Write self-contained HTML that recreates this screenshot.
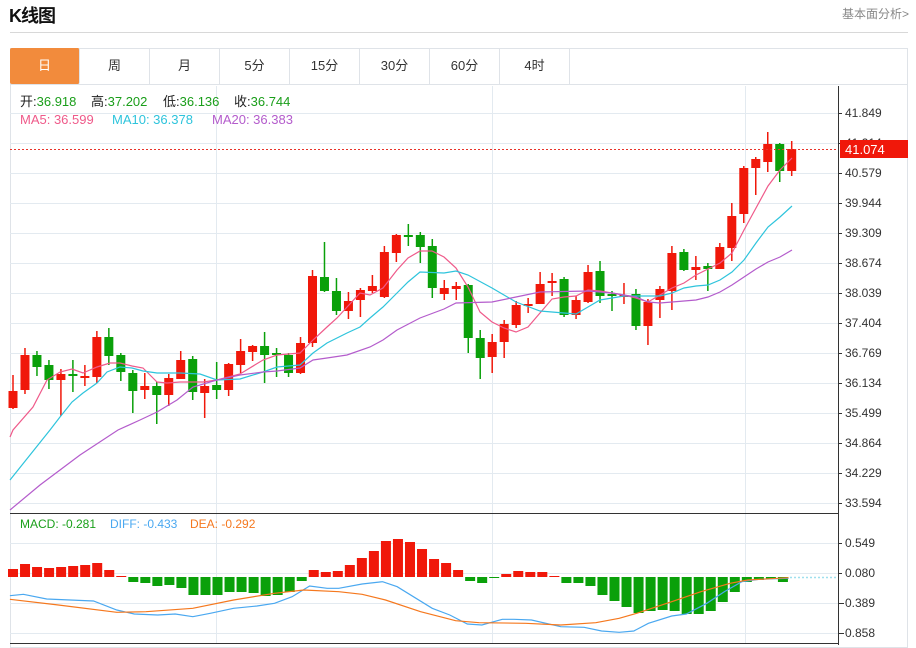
<!DOCTYPE html>
<html><head><meta charset="utf-8">
<style>
*{margin:0;padding:0;box-sizing:border-box}
body{width:916px;height:645px;background:#fff;font-family:"Liberation Sans","Noto Sans CJK SC",sans-serif;position:relative;overflow:hidden}
.title{position:absolute;left:9px;top:2px;font-size:18px;font-weight:bold;color:#111;letter-spacing:-1px}
.more{position:absolute;right:7px;top:5px;font-size:12px;color:#888}
.hr{position:absolute;left:10px;top:32px;width:898px;height:1px;background:#d8d8d8}
.box{position:absolute;left:10px;top:48px;width:898px;height:600px;border:1px solid #dfe3e8}
.tabs{position:absolute;left:10px;top:48px;height:37px;width:898px;border-bottom:1px solid #dfe3e8}
.tab{position:absolute;top:0;width:70px;height:36px;line-height:36px;text-align:center;font-size:13px;color:#333;border-right:1px solid #dfe3e8}
.tab.on{background:#f28b3c;color:#fff;border-radius:2px}
svg{position:absolute;left:0;top:0}
</style></head><body>
<div class="title">K线图</div>
<div class="more">基本面分析&gt;</div>
<div class="hr"></div>
<div class="box"></div>
<div class="tabs">
<div class="tab on" style="left:0">日</div>
<div class="tab" style="left:70px">周</div>
<div class="tab" style="left:140px">月</div>
<div class="tab" style="left:210px">5分</div>
<div class="tab" style="left:280px">15分</div>
<div class="tab" style="left:350px">30分</div>
<div class="tab" style="left:420px">60分</div>
<div class="tab" style="left:490px">4时</div>
</div>
<svg id="s" width="916" height="645" xmlns="http://www.w3.org/2000/svg" font-family="Liberation Sans, Noto Sans CJK SC, sans-serif">
<g id="grid" stroke="#e3eaf0" stroke-width="1"></g>
<g id="cd"></g>
<g id="ln" fill="none" stroke-width="1.2"></g>
<g id="mc"></g>
<line x1="10" y1="149.5" x2="838" y2="149.5" stroke="#e8332a" stroke-dasharray="2,2"/>
<line x1="790" y1="577.5" x2="838" y2="577.5" stroke="#9fe0ee" stroke-dasharray="2,2" stroke-width="1.5"/>
<line x1="838.5" y1="86" x2="838.5" y2="645" stroke="#333"/>
<line x1="10" y1="513.5" x2="838" y2="513.5" stroke="#333"/>
<line x1="10" y1="643.5" x2="838" y2="643.5" stroke="#333"/>
<g id="ax" font-size="12" fill="#333"></g>
<rect x="840" y="140" width="68" height="18" fill="#f0180a"/>
<text x="845" y="154" font-size="13" fill="#fff">41.074</text>
<g font-size="13">
<text x="20" y="106" fill="#222">开:<tspan fill="#1a9e1a">36.918</tspan></text>
<text x="91" y="106" fill="#222">高:<tspan fill="#1a9e1a">37.202</tspan></text>
<text x="163" y="106" fill="#222">低:<tspan fill="#1a9e1a">36.136</tspan></text>
<text x="234" y="106" fill="#222">收:<tspan fill="#1a9e1a">36.744</tspan></text>
<text x="20" y="124" fill="#ef5a8a">MA5: 36.599</text>
<text x="112" y="124" fill="#2ec4dc">MA10: 36.378</text>
<text x="212" y="124" fill="#b45ccc">MA20: 36.383</text>
</g>
<g font-size="12">
<text x="20" y="528" fill="#1aa01a">MACD: -0.281</text>
<text x="110" y="528" fill="#4aa8f0">DIFF: -0.433</text>
<text x="190" y="528" fill="#f5781e">DEA: -0.292</text>
</g>
</svg>
<script>
var NS="http://www.w3.org/2000/svg";
function el(p,t,a){var e=document.createElementNS(NS,t);for(var k in a)e.setAttribute(k,a[k]);document.getElementById(p).appendChild(e);return e;}
[113,143,173,203,233,263,293,323,353,383,413,443,473,503,543,573,603,633].forEach(function(y){el("grid","line",{x1:10,x2:838,y1:y+.5,y2:y+.5});});
[216,492,745].forEach(function(x){el("grid","line",{x1:x+.5,x2:x+.5,y1:86,y2:513});el("grid","line",{x1:x+.5,x2:x+.5,y1:514,y2:643});});
var labs=[[113,"41.849"],[143,"41.214"],[173,"40.579"],[203,"39.944"],[233,"39.309"],[263,"38.674"],[293,"38.039"],[323,"37.404"],[353,"36.769"],[383,"36.134"],[413,"35.499"],[443,"34.864"],[473,"34.229"],[503,"33.594"],[543,"0.549"],[573,"0.080"],[603,"-0.389"],[633,"-0.858"]];
labs.forEach(function(l){var t=el("ax","text",{x:845,y:l[0]+4});t.textContent=l[1].replace("-","");if(l[1][0]=="-"){el("ax","line",{x1:839,x2:844,y1:l[0]+.5,y2:l[0]+.5,stroke:"#333"});}el("ax","line",{x1:839,x2:842,y1:l[0]+.5,y2:l[0]+.5,stroke:"#333"});});
var C=[[391,408,375,409,1],[355,390,348,394,1],[355,367,351,376,0],[365,380,360,389,0],[374,380,369,416,1],[374,376,360,392,0],[376,377,365,386,1],[337,377,331,383,1],[337,356,328,365,0],[355,372,353,381,0],[373,391,370,413,0],[386,390,373,399,1],[386,395,382,424,0],[378,395,374,406,1],[360,379,351,379,1],[359,392,356,400,0],[386,393,379,418,1],[385,390,362,399,0],[364,390,363,396,1],[351,365,339,373,1],[346,352,345,361,1],[346,355,332,383,0],[353,355,348,377,0],[355,373,353,377,0],[343,373,337,374,1],[276,343,270,347,1],[277,291,242,292,0],[291,311,278,315,0],[301,311,292,319,1],[290,300,288,317,1],[286,291,275,293,1],[252,297,246,298,1],[235,253,234,262,1],[235,237,224,246,0],[235,247,232,263,0],[246,288,239,298,0],[288,294,280,300,1],[286,289,282,300,1],[285,338,284,353,0],[338,358,330,379,0],[342,357,334,373,1],[324,342,320,358,1],[305,325,301,328,1],[304,306,298,313,1],[284,304,272,304,1],[281,283,273,296,1],[279,315,277,317,0],[300,315,296,319,1],[272,302,265,303,1],[271,296,261,303,0],[294,296,291,311,0],[295,296,283,304,1],[294,326,289,330,0],[302,326,299,345,1],[289,300,286,318,1],[253,291,246,310,1],[252,270,249,271,0],[267,270,256,280,1],[266,269,263,291,0],[247,269,243,269,1],[216,248,203,261,1],[168,214,166,223,1],[159,168,157,195,1],[144,162,132,172,1],[144,171,143,182,0],[149,171,141,176,1]];
C.forEach(function(c,i){var x=13+i*11.98;var col=c[4]?"#f0180a":"#0aa00a";
el("cd","line",{x1:x,x2:x,y1:c[2],y2:c[3],stroke:col,"stroke-width":1.5});
el("cd","rect",{x:x-4.5,y:c[0],width:9,height:Math.max(c[1]-c[0],2),fill:col});});
function pl(pts,col){el("ln","polyline",{points:pts.map(function(p){return p[0]+","+p[1]}).join(" "),stroke:col});}
pl([[10,437],[13,430],[33,407],[47,380],[60,372],[72,369],[83,373],[97,367],[110,363],[120,363],[132,366],[143,368],[157,382],[167,383],[180,382],[203,382],[217,380],[240,374],[263,360],[277,355],[300,353],[313,340],[327,327],[337,318],[360,293],[370,295],[383,288],[397,270],[408,258],[420,251],[432,251],[444,257],[456,268],[468,287],[480,312],[492,322],[504,328],[516,332],[528,327],[540,313],[552,299],[564,297],[576,296],[588,290],[600,291],[612,293],[624,295],[636,298],[648,302],[660,295],[672,288],[684,283],[696,275],[708,269],[720,263],[732,253],[744,230],[756,208],[768,186],[780,170],[792,158]],"#ef5a8a");
pl([[10,480],[30,455],[50,430],[60,417],[72,402],[83,393],[97,383],[107,372],[120,367],[132,368],[143,371],[157,373],[167,373],[180,373],[200,374],[217,380],[240,379],[263,372],[277,367],[300,365],[313,353],[327,343],[347,333],[360,327],[370,318],[383,307],[397,293],[408,282],[420,272],[444,273],[456,271],[468,275],[492,288],[516,302],[540,311],[552,312],[576,314],[588,307],[600,300],[624,296],[636,296],[660,296],[672,293],[684,288],[696,286],[708,285],[720,280],[732,272],[744,260],[756,243],[768,227],[780,217],[792,206]],"#2ec4dc");
pl([[10,510],[40,485],[80,455],[118,430],[140,420],[157,412],[177,400],[193,387],[217,380],[240,375],[263,372],[277,371],[300,368],[313,360],[327,358],[347,355],[370,347],[383,340],[397,330],[420,318],[444,309],[456,303],[492,302],[516,297],[540,292],[588,291],[612,293],[636,297],[648,302],[660,303],[684,301],[696,300],[708,297],[720,292],[732,285],[744,277],[756,269],[768,262],[780,257],[792,250]],"#b45ccc");
var M=[569,564,567,568,567,566,565,563,570,576,582,583,586,585,588,595,595,595,592,592,593,596,595,592,581,570,572,571,565,558,551,541,539,542,549,559,563,570,581,583,578,574,571,572,572,576,583,583,586,595,601,607,613,611,610,611,614,614,611,602,592,582,580,579,582];
M.forEach(function(v,i){var x=13+i*12.03;var z=577;var up=v<z;var col=up?"#f0180a":"#0aa00a";var y=up?v:z,h=Math.max(Math.abs(v-z),1);
el("mc","rect",{x:x-5,y:y,width:10,height:h,fill:col});});
function ml(pts,col){el("mc","polyline",{points:pts.map(function(p){return (p[0]/1.712).toFixed(1)+","+(500+p[1]/3).toFixed(1)}).join(" "),stroke:col,fill:"none","stroke-width":1.2});}
ml([[17,287],[40,283],[80,297],[160,303],[200,330],[230,342],[270,345],[300,342],[330,350],[360,340],[400,325],[440,318],[470,310],[500,290],[530,258],[560,265],[580,265],[620,252],[655,245],[680,260],[740,325],[770,345],[800,372],[825,375],[860,358],[880,358],[910,360],[960,380],[1000,382],[1030,393],[1060,397],[1085,393],[1110,370],[1150,348],[1175,342],[1210,310],[1240,275],[1270,245],[1300,238],[1350,235]],"#4aa8f0");
ml([[17,298],[100,315],[200,337],[250,335],[330,325],[400,300],[470,280],[520,270],[580,275],[620,283],[660,300],[720,335],[780,362],[820,368],[900,370],[960,375],[1020,368],[1060,355],[1090,340],[1150,305],[1200,275],[1250,250],[1280,240],[1350,233]],"#f5781e");
</script>
</body></html>
